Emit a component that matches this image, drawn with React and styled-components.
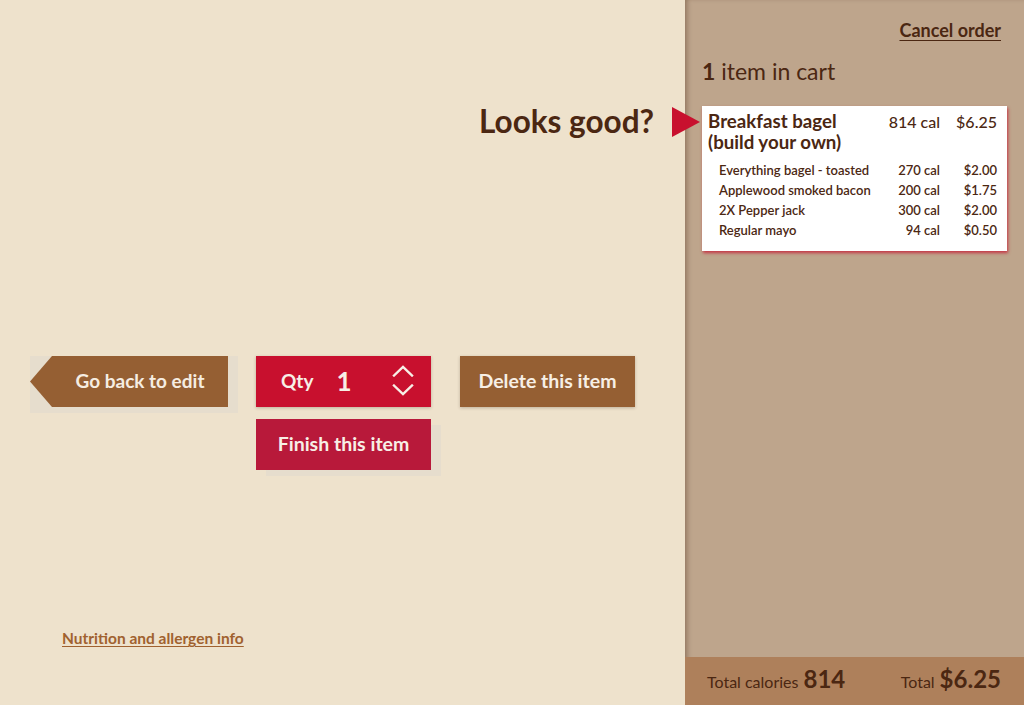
import styled, { createGlobalStyle } from 'styled-components'

const Global = createGlobalStyle`
html, body { margin: 0; padding: 0; }
body { font-family: Lato, "Noto Sans", sans-serif; }
* { box-sizing: border-box; }
`

const Page = styled.div`
display: flex;
width: 1024px;
height: 705px;
overflow: hidden;
`

const Main = styled.div`
width: 685px;
height: 100%;
background: #eee2cc;
display: flex;
flex-direction: column;
padding: 101px 31px 58px 30px;
`

const Heading = styled.h1`
margin: 0;
align-self: flex-end;
font-size: 31.5px;
font-weight: 700;
color: #4b2712;
line-height: 40px;
`

const Actions = styled.div`
margin-top: 215px;
display: flex;
align-items: flex-start;
gap: 18px;
`

const Stack = styled.div`
display: flex;
flex-direction: column;
gap: 12px;
`

const Backdrop = styled.div`
width: 208px;
height: 57px;
background: #e6ddcd;
`

const BackBtn = styled.button`
width: 198px;
height: 51px;
border: none;
background: #955f33;
clip-path: polygon(22px 0, 100% 0, 100% 100%, 22px 100%, 0 50%);
color: #f5ede2;
font: 700 19px Lato, sans-serif;
padding: 0 0 2px 22px;
cursor: pointer;
`

const Btn = styled.button`
width: 175px;
height: 51px;
border: none;
padding: 0 0 2px;
background: ${(p) => p.bg};
color: #f7efe6;
font: 700 19.5px Lato, sans-serif;
box-shadow: ${(p) => (p.flat ? '10px 6px 0 #e6ddcd' : '0 1px 3px rgba(60,30,10,0.25)')};
cursor: pointer;
`

const QtyBox = styled.div`
width: 175px;
height: 51px;
background: #c8102e;
color: #f7efe6;
display: flex;
align-items: center;
padding: 0 17px 2px 25px;
box-shadow: 0 1px 3px rgba(60,30,10,0.25);
`

const QtyLabel = styled.span`
font-weight: 700;
font-size: 19px;
`

const QtyValue = styled.span`
font-weight: 700;
font-size: 26px;
margin-left: 23px;
flex: 1;
`

const Chevrons = styled.div`
display: flex;
flex-direction: column;
gap: 7px;
`

const Spacer = styled.div`
flex: 1;
`

const InfoLink = styled.a`
margin-left: 32px;
color: #a0612f;
font-size: 15.5px;
font-weight: 700;
text-decoration: underline;
text-underline-offset: 2px;
cursor: pointer;
`

const Side = styled.aside`
width: 339px;
height: 100%;
background: #bea58c;
display: flex;
flex-direction: column;
box-shadow: inset 4px 0 5px -2px rgba(60,30,10,0.35);
`

const SideBody = styled.div`
flex: 1;
padding: 19px 23px 0 17px;
display: flex;
flex-direction: column;
`

const Cancel = styled.a`
align-self: flex-end;
font-size: 18px;
font-weight: 700;
color: #4b2712;
text-decoration: underline;
text-underline-offset: 3px;
cursor: pointer;
`

const CartCount = styled.div`
margin-top: 16px;
font-size: 23px;
color: #4b2712;
b { font-weight: 700; }
`

const Card = styled.div`
position: relative;
margin-top: 21px;
background: #fff;
padding: 5px 10px 11px 6px;
box-shadow: 1px 2px 3px rgba(200,16,46,0.75);
width: 305px;
color: #4b2712;
`

const Pointer = styled.div`
position: absolute;
left: -30px;
top: 1px;
width: 0;
height: 0;
border-top: 15px solid transparent;
border-bottom: 15px solid transparent;
border-left: 28px solid #c8102e;
`

const TitleRow = styled.div`
display: grid;
grid-template-columns: minmax(0, 1fr) 70px 57px;
align-items: start;
margin-bottom: 7px;
`

const Title = styled.div`
font-size: 18.7px;
font-weight: 700;
line-height: 21px;
white-space: nowrap;
`

const Figure = styled.div`
text-align: right;
white-space: nowrap;
font-size: ${(p) => (p.small ? '13px' : '16px')};
font-weight: ${(p) => (p.small ? 600 : 500)};
line-height: ${(p) => (p.small ? '20px' : '22px')};
`

const ItemRow = styled.div`
display: grid;
grid-template-columns: minmax(0, 1fr) 70px 57px;
padding-left: 11px;
`

const ItemName = styled.div`
font-size: 13px;
font-weight: 600;
line-height: 20px;
white-space: nowrap;
`

const Footer = styled.div`
height: 48px;
background: #ae805b;
display: flex;
align-items: center;
justify-content: space-between;
padding: 0 23px 6px 22px;
color: #4b2712;
`

const Total = styled.div`
font-size: 16px;
display: flex;
align-items: baseline;
gap: 5px;
b { font-size: 24px; font-weight: 700; }
`

const items = [
  ['Everything bagel - toasted', '270 cal', '$2.00'],
  ['Applewood smoked bacon', '200 cal', '$1.75'],
  ['2X Pepper jack', '300 cal', '$2.00'],
  ['Regular mayo', '94 cal', '$0.50'],
]

const Chevron = ({ up }) => (
  <svg width="22" height="12" viewBox="0 0 22 12" fill="none" stroke="#f7efe6" strokeWidth="2.4" strokeLinecap="square">
    <path d={up ? 'M2 10.5 L11 2 L20 10.5' : 'M2 1.5 L11 10 L20 1.5'} />
  </svg>
)

export default function App() {
  return (
    <>
      <Global />
      <Page>
        <Main>
          <Heading>Looks good?</Heading>
          <Actions>
            <Backdrop>
              <BackBtn>Go back to edit</BackBtn>
            </Backdrop>
            <Stack>
              <QtyBox>
                <QtyLabel>Qty</QtyLabel>
                <QtyValue>1</QtyValue>
                <Chevrons>
                  <Chevron up />
                  <Chevron />
                </Chevrons>
              </QtyBox>
              <Btn bg="#b8193a" flat>Finish this item</Btn>
            </Stack>
            <Btn bg="#955f33" style={{ marginLeft: 11 }}>Delete this item</Btn>
          </Actions>
          <Spacer />
          <InfoLink>Nutrition and allergen info</InfoLink>
        </Main>
        <Side>
          <SideBody>
            <Cancel>Cancel order</Cancel>
            <CartCount><b>1</b> item in cart</CartCount>
            <Card>
              <Pointer />
              <TitleRow>
                <Title>Breakfast bagel<br />(build your own)</Title>
                <Figure>814 cal</Figure>
                <Figure>$6.25</Figure>
              </TitleRow>
              {items.map(([name, cal, price]) => (
                <ItemRow key={name}>
                  <ItemName>{name}</ItemName>
                  <Figure small>{cal}</Figure>
                  <Figure small>{price}</Figure>
                </ItemRow>
              ))}
            </Card>
          </SideBody>
          <Footer>
            <Total>Total calories <b>814</b></Total>
            <Total>Total <b>$6.25</b></Total>
          </Footer>
        </Side>
      </Page>
    </>
  )
}
